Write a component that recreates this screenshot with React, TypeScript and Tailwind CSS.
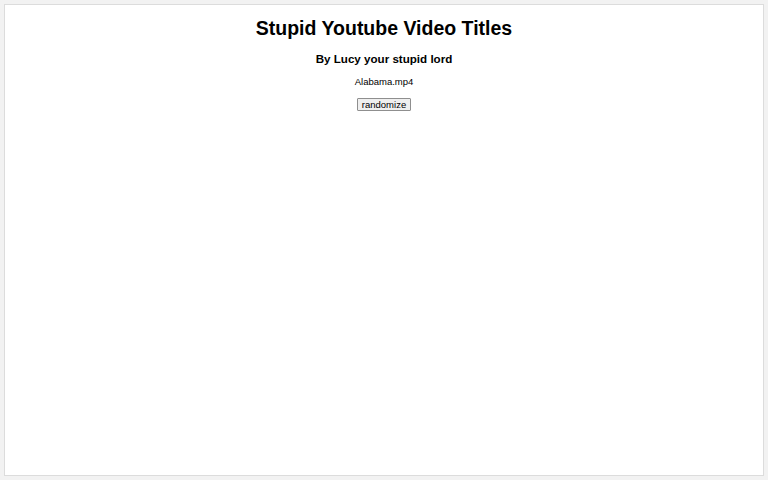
import React, { useState } from 'react';

const titles = ['Alabama.mp4', 'Untitled (2).mov', 'final_FINAL_v3.avi', 'DO NOT WATCH.mp4'];

export default function App() {
  const [title, setTitle] = useState(titles[0]);

  const randomize = () => {
    setTitle(titles[Math.floor(Math.random() * titles.length)]);
  };

  return (
    <div className="h-[480px] w-[768px] bg-[#f2f2f2] p-[4px] font-['Liberation_Sans',Arial,sans-serif] text-black">
      <div className="flex h-full flex-col items-center border border-[#dcdcdc] bg-white pt-[11px]">
        <h1 className="text-[19.5px] font-bold leading-[24px]">Stupid Youtube Video Titles</h1>
        <h3 className="mt-[12px] text-[11.6px] font-bold leading-[14px]">By Lucy your stupid lord</h3>
        <p className="mt-[10px] text-[9.5px] leading-[12px]">{title}</p>
        <button
          onClick={randomize}
          className="mt-[10px] border border-[#8f8f8f] bg-[#efefef] px-[4px] text-[9.5px] leading-[11px] rounded-[1px]"
        >
          randomize
        </button>
      </div>
    </div>
  );
}
